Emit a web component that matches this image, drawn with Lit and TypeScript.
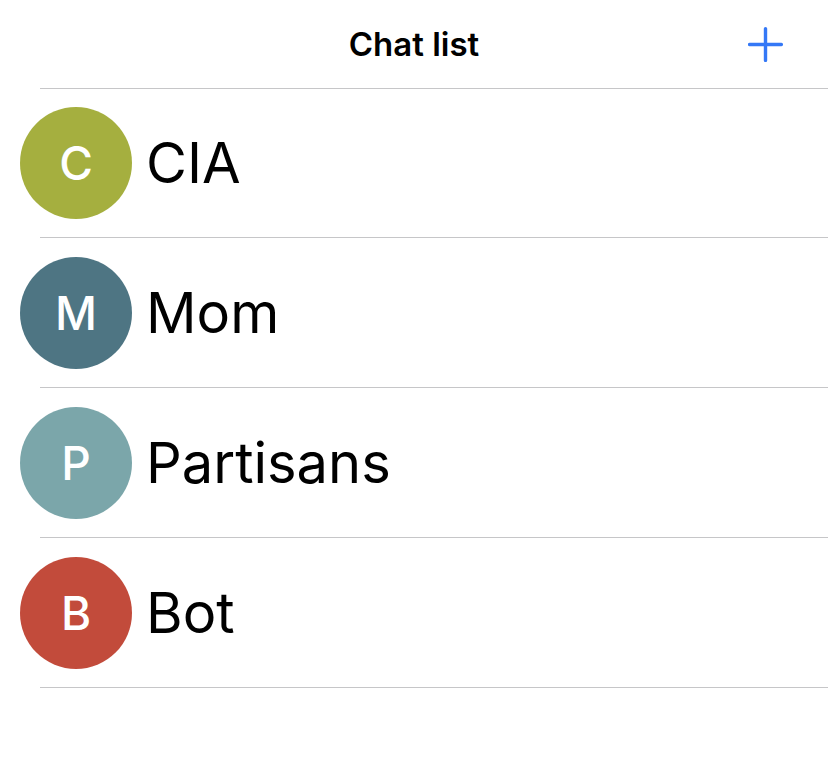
import { LitElement, html, css } from "lit";
import { customElement } from "lit/decorators.js";
import { styleMap } from "lit/directives/style-map.js";

interface Chat {
  name: string;
  color: string;
}

const chats: Chat[] = [
  { name: "CIA", color: "#a5af3f" },
  { name: "Mom", color: "#4e7583" },
  { name: "Partisans", color: "#7ba6aa" },
  { name: "Bot", color: "#c24b3b" },
];

@customElement("app-root")
export class AppRoot extends LitElement {
  static styles = css`
    :host {
      display: block;
      min-height: 100vh;
      background: #fff;
      color: #000;
      font-family: Inter, "Liberation Sans", sans-serif;
    }
    .bar {
      display: grid;
      grid-template-columns: 1fr auto 1fr;
      align-items: center;
      height: 88px;
      padding: 0 40px;
    }
    .title {
      grid-column: 2;
      margin: 0;
      font-size: 33px;
      line-height: 40px;
      font-weight: 600;
    }
    .add {
      justify-self: end;
      display: flex;
      padding: 4px;
      border: 0;
      background: none;
      color: #3478f6;
      cursor: pointer;
    }
    .list {
      margin: 0;
      padding: 0;
      list-style: none;
    }
    .list::before,
    .row::after {
      content: "";
      display: block;
      height: 1px;
      margin-left: 40px;
      background: #c6c6c8;
    }
    .list::before {
      margin-bottom: -1px;
    }
    .chat {
      display: flex;
      align-items: center;
      gap: 14px;
      padding: 19px 20px 18px;
      color: inherit;
      text-decoration: none;
    }
    .avatar {
      display: grid;
      place-items: center;
      flex: none;
      width: 112px;
      height: 112px;
      border-radius: 50%;
      color: #fff;
      font-size: 46px;
      line-height: 56px;
      font-weight: 500;
    }
    .name {
      font-size: 56px;
      line-height: 74px;
    }
  `;

  render() {
    return html`
      <header class="bar">
        <h1 class="title">Chat list</h1>
        <button class="add" aria-label="New chat">
          <svg width="36" height="36" viewBox="0 0 36 36" fill="none" stroke="currentColor" stroke-width="3.4" stroke-linecap="round">
            <path d="M17.5 2.6v31.8M1.6 18.5h31.8" />
          </svg>
        </button>
      </header>
      <ul class="list">
        ${chats.map(
          (chat) => html`
            <li class="row">
              <a class="chat" href="#">
                <span class="avatar" aria-hidden="true" style=${styleMap({ backgroundColor: chat.color })}>${chat.name[0]}</span>
                <span class="name">${chat.name}</span>
              </a>
            </li>
          `
        )}
      </ul>
    `;
  }
}
